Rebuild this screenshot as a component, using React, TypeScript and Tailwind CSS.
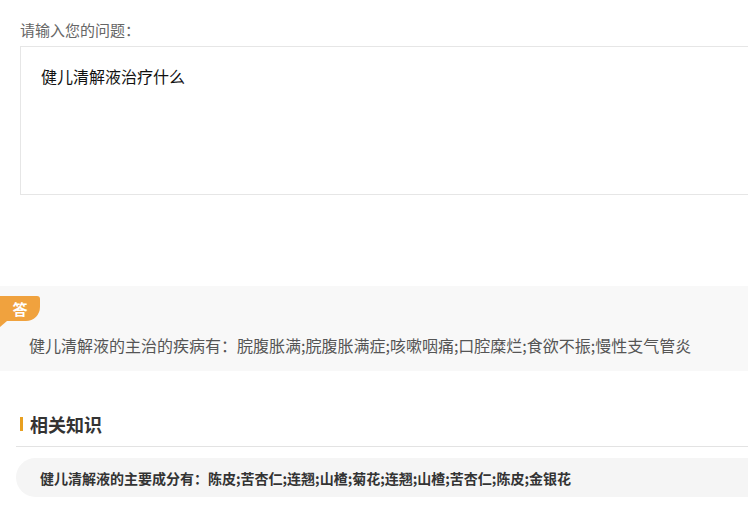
import React from "react";

export default function App() {
  return (
    <div
      className="w-[748px] h-[518px] bg-white overflow-hidden relative"
      style={{ fontFamily: '"Microsoft YaHei", "Noto Sans CJK SC", sans-serif' }}
    >
      <div className="pt-[20px] pl-[20px]">
        <div className="text-[15px] leading-[20px] text-[#666666]">请输入您的问题：</div>
        <div className="mt-[6px] w-[760px] h-[149px] border border-[#e6e6e6] pl-[20px] pt-[17px]">
          <div className="text-[16px] leading-[24px] text-[#111111]">健儿清解液治疗什么</div>
        </div>
      </div>

      <div className="mt-[91px] h-[85px] bg-[#f8f8f8] pt-[10px]">
        <div className="relative w-[40px] h-[25px] bg-[#f0a23e] rounded-br-[14px] rounded-tr-[3px] flex items-center justify-center">
          <span className="text-white text-[15px] font-bold leading-none">答</span>
          <div className="absolute left-0 top-[25px] w-0 h-0 border-t-[6px] border-t-[#f0a23e] border-r-[7px] border-r-transparent" />
        </div>
        <div className="mt-[12px] pl-[29px] text-[16px] leading-[24px] text-[#555555] whitespace-nowrap">
          健儿清解液的主治的疾病有：脘腹胀满;脘腹胀满症;咳嗽咽痛;口腔糜烂;食欲不振;慢性支气管炎
        </div>
      </div>

      <div className="mt-[41px] pl-[20px] flex items-center h-[24px]">
        <div className="w-[3px] h-[14px] bg-[#e8a020]" />
        <div className="ml-[7px] text-[18px] leading-[24px] font-bold text-[#333333]">相关知识</div>
      </div>
      <div className="mt-[10px] ml-[16px] border-t border-[#e3e3e3]" />
      <div className="mt-[11px] ml-[16px] w-[760px] h-[39px] rounded-l-full bg-[#f5f5f5] pl-[24px] flex items-center">
        <div className="text-[14px] leading-[20px] font-bold text-[#333333] whitespace-nowrap">
          健儿清解液的主要成分有：陈皮;苦杏仁;连翘;山楂;菊花;连翘;山楂;苦杏仁;陈皮;金银花
        </div>
      </div>
    </div>
  );
}
